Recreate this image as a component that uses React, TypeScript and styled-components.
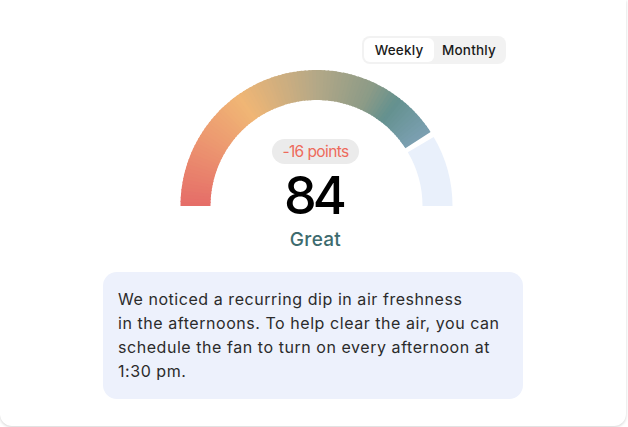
import React from 'react';
import styled, { createGlobalStyle } from 'styled-components';

const GlobalStyle = createGlobalStyle`
  html, body {
    margin: 0;
    padding: 0;
    background: #ffffff;
  }
  body {
    font-family: 'Inter', 'Noto Sans', sans-serif;
    width: 628px;
    height: 427px;
    overflow: hidden;
  }
`;

const Card = styled.div`
  width: 626px;
  height: 426px;
  box-sizing: border-box;
  background: #fff;
  border-radius: 0 0 12px 12px;
  box-shadow: 0 1px 3px rgba(0, 0, 0, 0.18);
  padding-top: 36px;
  display: flex;
  flex-direction: column;
  align-items: center;
`;

const ToggleRow = styled.div`
  width: 100%;
  display: flex;
  justify-content: flex-end;
  padding-right: 120px;
  box-sizing: border-box;
`;

const Toggle = styled.div`
  display: flex;
  padding: 2px;
  background: #f2f2f2;
  border-radius: 8px;
  height: 28px;
  box-sizing: border-box;
`;

const ToggleButton = styled.button<{ $active?: boolean }>`
  border: none;
  font-family: inherit;
  font-size: 13.5px;
  font-weight: 500;
  letter-spacing: 0.2px;
  color: #1a1a1a;
  background: ${(p) => (p.$active ? '#fff' : 'transparent')};
  border-radius: 6px;
  height: 24px;
  padding: 0;
  width: 70px;
  cursor: pointer;
`;

const GaugeWrap = styled.div`
  position: relative;
  width: 290px;
  margin: 2px 0 0 5px;
  display: flex;
  flex-direction: column;
  align-items: center;
`;

const GaugeSvg = styled.svg`
  position: absolute;
  top: 0;
  left: 0;
`;

const Pill = styled.div`
  position: relative;
  margin-top: 73px;
  height: 25px;
  padding: 0 10px;
  border-radius: 13px;
  background: #ebebeb;
  color: #ee6a5b;
  font-size: 15.5px;
  font-weight: 400;
  letter-spacing: -0.6px;
  line-height: 25px;
`;

const Score = styled.div`
  position: relative;
  margin-top: 6px;
  font-size: 52px;
  font-weight: 500;
  line-height: 52px;
  color: #000;
  letter-spacing: -4px;
  padding-right: 4px;
`;

const Label = styled.div`
  margin-top: 7px;
  font-size: 19px;
  font-weight: 500;
  line-height: 22px;
  color: #3d6b6e;
  letter-spacing: 0.3px;
`;

const Note = styled.p`
  margin: 21px 0 0 0;
  width: 420px;
  box-sizing: border-box;
  padding: 15px 10px 16px 15px;
  background: #edf1fc;
  border-radius: 14px;
  font-size: 16px;
  line-height: 24px;
  color: #2b2b2b;
  letter-spacing: 0.55px;
  white-space: nowrap;
`;

const stops: [number, [number, number, number]][] = [
  [0, [229, 108, 104]],
  [30, [236, 150, 112]],
  [55, [240, 182, 117]],
  [90, [180, 168, 135]],
  [115, [140, 155, 135]],
  [128, [100, 145, 143]],
  [147, [124, 160, 178]],
];

function colorAt(a: number) {
  for (let i = 0; i < stops.length - 1; i++) {
    const [a0, c0] = stops[i];
    const [a1, c1] = stops[i + 1];
    if (a >= a0 && a <= a1) {
      const t = (a - a0) / (a1 - a0);
      const c = c0.map((v, k) => Math.round(v + (c1[k] - v) * t));
      return `rgb(${c[0]},${c[1]},${c[2]})`;
    }
  }
  const last = stops[stops.length - 1][1];
  return `rgb(${last[0]},${last[1]},${last[2]})`;
}

// angle measured from the left horizontal, clockwise over the top
function pt(cx: number, cy: number, r: number, a: number) {
  const rad = (Math.PI * (180 - a)) / 180;
  return [cx + r * Math.cos(rad), cy - r * Math.sin(rad)];
}

function band(cx: number, cy: number, r0: number, r1: number, a0: number, a1: number) {
  const [x0, y0] = pt(cx, cy, r1, a0);
  const [x1, y1] = pt(cx, cy, r1, a1);
  const [x2, y2] = pt(cx, cy, r0, a1);
  const [x3, y3] = pt(cx, cy, r0, a0);
  return `M${x0} ${y0} A${r1} ${r1} 0 0 1 ${x1} ${y1} L${x2} ${y2} A${r0} ${r0} 0 0 0 ${x3} ${y3} Z`;
}

function Gauge() {
  const cx = 145.5;
  const cy = 140;
  const r1 = 136;
  const r0 = 106;
  const end = 147;
  const n = 90;
  const segs = [];
  for (let i = 0; i < n; i++) {
    const a0 = (end * i) / n;
    const a1 = (end * (i + 1)) / n + (i < n - 1 ? 0.6 : 0);
    segs.push(<path key={i} d={band(cx, cy, r0, r1, a0, a1)} fill={colorAt((a0 + a1) / 2)} />);
  }
  return (
    <GaugeSvg width="292" height="142" viewBox="0 0 292 142">
      {segs}
      <path d={band(cx, cy, r0, r1, 149.5, 180)} fill="#e9f0fb" />
    </GaugeSvg>
  );
}

export default function App() {
  return (
    <>
      <GlobalStyle />
      <Card>
        <ToggleRow>
          <Toggle>
            <ToggleButton $active>Weekly</ToggleButton>
            <ToggleButton>Monthly</ToggleButton>
          </Toggle>
        </ToggleRow>
        <GaugeWrap>
          <Gauge />
          <Pill>-16 points</Pill>
          <Score>84</Score>
          <Label>Great</Label>
        </GaugeWrap>
        <Note>
          We noticed a recurring dip in air freshness
          <br />
          in the afternoons. To help clear the air, you can
          <br />
          schedule the fan to turn on every afternoon at
          <br />
          1:30 pm.
        </Note>
      </Card>
    </>
  );
}
